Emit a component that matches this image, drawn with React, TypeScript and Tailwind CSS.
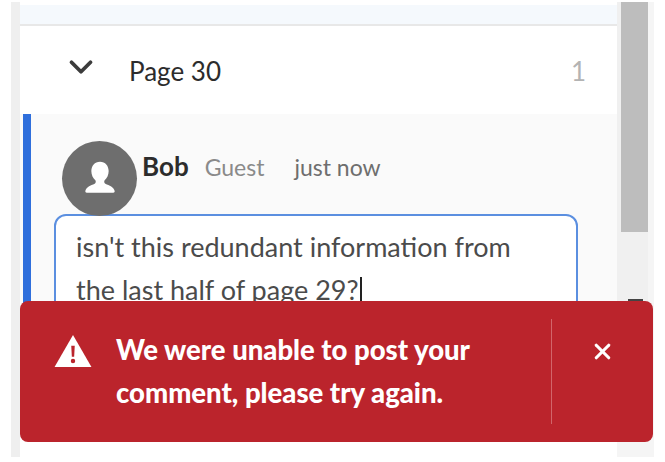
import React from 'react';
import { ChevronDown, X } from 'lucide-react';

const font = "font-['Lato','Noto_Sans',sans-serif]";

function Avatar() {
  return (
    <div className="relative z-10 flex h-[75px] w-[75px] shrink-0 items-center justify-center rounded-full bg-[#6e6e6e]">
      <svg viewBox="0 0 36 36" className="h-[48px] w-[48px]" fill="#fff">
        <path d="M18 5c-4 0-6.500 3-6.500 7 0 3 1.300 5.500 3 7 .5.500.5 2-.5 2.500-3 1.300-6.500 2.500-7 5.500-.1.800.4 1.300 1 1.300h20c.6 0 1.100-.5 1-1.300-.5-3-4-4.200-7-5.500-1-.5-1-2-.5-2.500 1.700-1.500 3-4 3-7 0-4-2.500-7-6.500-7z" />
      </svg>
    </div>
  );
}

function ErrorToast() {
  return (
    <div className="absolute left-[20px] top-[301px] z-20 flex h-[141px] w-[633px] items-stretch rounded-[8px] bg-[#bb242c] text-white">
      <div className="flex flex-1 items-start pl-[34px] pt-[34px]">
        <svg viewBox="0 0 38 34" className="h-[33px] w-[38px] shrink-0">
          <path d="M19 0 L38 33 H0 Z" fill="#fff" />
          <path d="M17.200 11h3.600l-.6 11.500h-2.400zM19 24.500a2.300 2.300 0 1 1 0 4.600 2.300 2.300 0 0 1 0-4.600z" fill="#bb242c" />
        </svg>
        <p className="ml-[24px] -mt-[7px] w-[420px] text-[27.5px] font-black leading-[43px]">
          We were unable to post your comment, please try again.
        </p>
      </div>
      <div className="my-[18px] w-px bg-[#d2656a]" />
      <div className="flex w-[101px] justify-center pt-[38px]">
        <X size={25} strokeWidth={3} />
      </div>
    </div>
  );
}

export default function App() {
  return (
    <div className={`relative flex h-[462px] w-[665px] overflow-hidden bg-white pl-[11px] pt-[2px] pb-[5px] ${font}`}>
      <div className="w-[9px] shrink-0 bg-[#efefef]" />
      <div className="flex w-[597px] shrink-0 flex-col pt-[3px] pb-[20px]">
        <div className="h-[19px] shrink-0 bg-[#f5f9fd]" />
        <div className="h-[2px] shrink-0 bg-[#e8e8e8]" />
        <div className="flex h-[88px] shrink-0 items-center pr-[31px] pl-[42px]">
          <ChevronDown size={38} strokeWidth={2.4} className="mb-[6px] text-[#3c3c3c]" />
          <span className="ml-[29px] mt-[2px] text-[26px] text-[#2c2c2c]">Page 30</span>
          <span className="ml-auto mt-[2px] text-[26px] text-[#b3b3b3]">1</span>
        </div>
        <div className="flex flex-1 bg-[#fafafa] pl-[3px]">
          <div className="w-[8px] shrink-0 bg-[#2f6fdc]" />
          <div className="flex-1 pt-[27px] pl-[23px] pr-[39px]">
            <div className="flex items-start pl-[8px]">
              <Avatar />
              <div className="ml-[5px] flex items-baseline pt-[6px]">
                <span className="text-[26px] font-bold text-[#2c2c2c]">Bob</span>
                <span className="ml-[16px] text-[23px] text-[#8a8a8a]">Guest</span>
                <span className="ml-[30px] text-[23px] text-[#6e6e6e]">just now</span>
              </div>
            </div>
            <div className="-mt-[2px] h-[150px] rounded-[12px] border-2 border-[#5b8fe0] bg-white px-[20px] py-[9px] text-[27px] leading-[43px] text-[#4b4b4b]">
              isn't this redundant information from the last half of page 29?
              <span className="ml-px inline-block h-[27px] w-[2px] translate-y-[4px] bg-[#222]" />
            </div>
          </div>
        </div>
      </div>
      <div className="flex w-[37px] shrink-0 flex-col bg-[#f5f5f5] pb-[20px]">
        <div className="flex-1 w-[31px] bg-[#f0f0f0] pl-[4px]">
          <div className="h-[230px] w-[27px] bg-[#bdbdbd]" />
          <div className="mt-[67px] ml-[7px] h-[2px] w-[15px] bg-[#444]" />
        </div>
      </div>
      <ErrorToast />
    </div>
  );
}
